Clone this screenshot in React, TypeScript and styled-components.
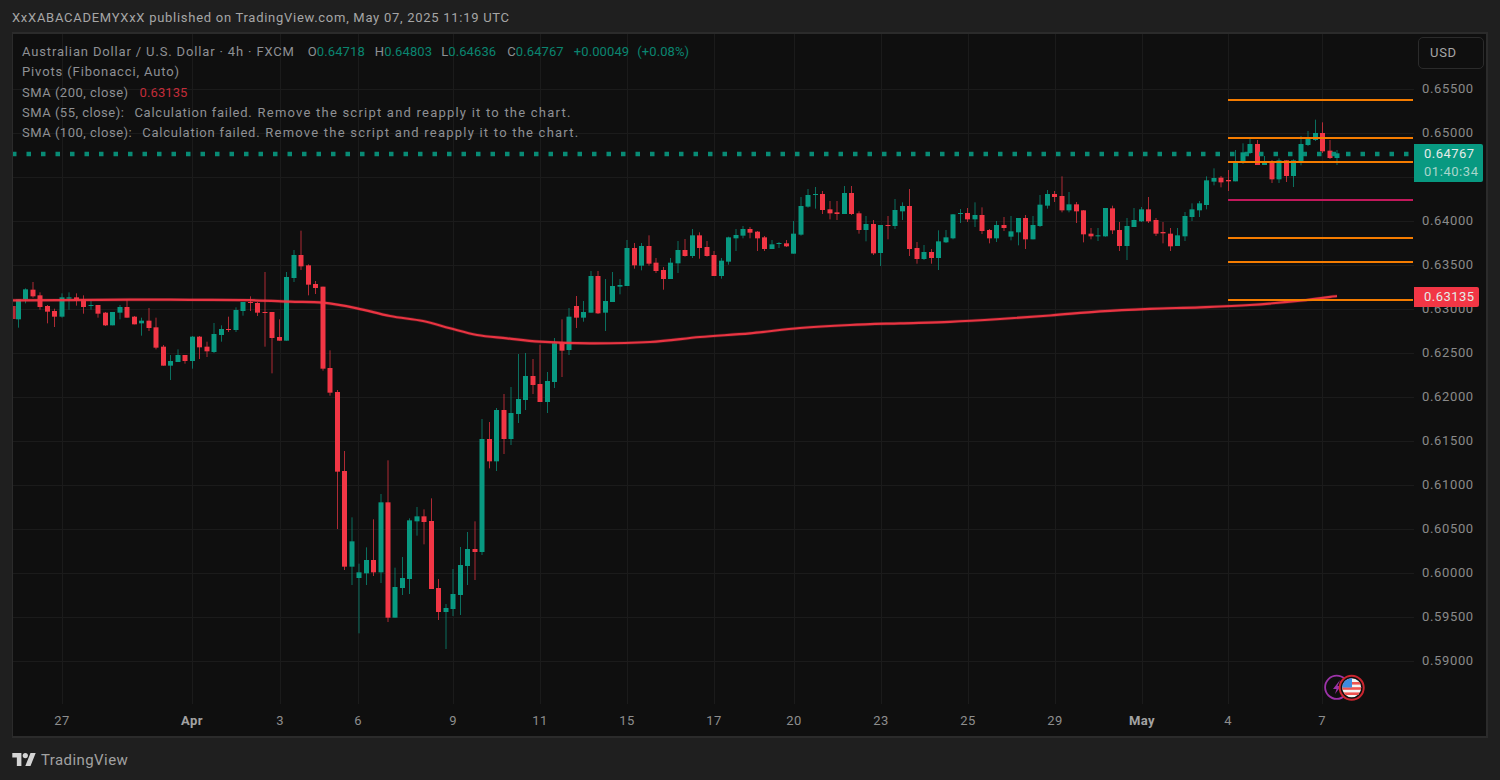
import React from "react";
import styled, { createGlobalStyle } from "styled-components";

const GlobalStyle = createGlobalStyle`
  html, body { margin: 0; padding: 0; background: #1f1f1f; }
  #root { width: 1500px; height: 780px; overflow: hidden; }
`;

const FONT = `"Roboto", "Liberation Sans", sans-serif`;
const UP = "#089981";
const DOWN = "#f23645";

const Page = styled.div`
  width: 1500px;
  height: 780px;
  display: flex;
  flex-direction: column;
  background: #1f1f1f;
  font-family: ${FONT};
`;
const Header = styled.div`
  height: 32px;
  flex: none;
  box-sizing: border-box;
  padding: 10px 0 0 12px;
  font-size: 13px;
  line-height: 16px;
  letter-spacing: 0.72px;
  color: #a6a6a6;
  white-space: nowrap;
`;
const Frame = styled.div`
  width: 1476px;
  height: 706px;
  flex: none;
  margin-left: 12px;
  box-sizing: border-box;
  border: 1px solid #2b2b2b;
  border-width: 2px 2px 2px 1px;
  background: #0f0f0f;
  display: grid;
  grid-template-columns: 1401px 72px;
  grid-template-rows: 670px 32px;
`;
const Plot = styled.div`
  position: relative;
  overflow: hidden;
  grid-column: 1;
  grid-row: 1;
`;
const PlotSvg = styled.svg`
  display: block;
  width: 1401px;
  height: 670px;
`;
const Legend = styled.div`
  position: absolute;
  left: 9px;
  top: 8px;
  font-size: 13px;
  line-height: 20.3px;
  color: #8e9094;
  white-space: nowrap;
`;
const LegendRow = styled.div`
  display: flex;
`;
const Chunk = styled.span<{ $ls: number; $gap?: number }>`
  letter-spacing: ${(p) => p.$ls}px;
  margin-left: ${(p) => p.$gap ?? 0}px;
`;
const UpValue = styled.span`
  color: #0a8570;
`;
const DownValue = styled.span`
  color: #c22c39;
  letter-spacing: 0.1px;
  margin-left: 11px;
`;
const PriceAxis = styled.div`
  position: relative;
  grid-column: 2;
  grid-row: 1 / span 2;
  box-sizing: border-box;
  padding: 3px 0 0 4px;
  display: flex;
  flex-direction: column;
  gap: 4px;
`;
const Currency = styled.div`
  box-sizing: border-box;
  flex: none;
  width: 66px;
  height: 32px;
  margin-bottom: -4px;
  border: 1px solid #2b2b2b;
  border-radius: 5px;
  padding-left: 11px;
  font-size: 13px;
  line-height: 30px;
  letter-spacing: 0.7px;
  color: #a6a6a6;
`;
const PriceTick = styled.div`
  height: 40px;
  flex: none;
  margin-left: 4px;
  font-size: 13px;
  line-height: 40px;
  letter-spacing: 0.65px;
  color: #8a8a8a;
`;
const PriceTag = styled.div<{ $top: number; $width: number; $bg: string }>`
  position: absolute;
  left: 0;
  top: ${(p) => p.$top}px;
  width: ${(p) => p.$width}px;
  box-sizing: border-box;
  padding: 1px 0 1px 10px;
  background: ${(p) => p.$bg};
  border-radius: 0 2px 2px 0;
  font-size: 13px;
  line-height: 18px;
  letter-spacing: 0.45px;
  color: #e4ece9;
`;
const Countdown = styled.div`
  color: #a9d6cc;
  letter-spacing: 0.55px;
`;
const TimeAxis = styled.div`
  grid-column: 1;
  grid-row: 2;
  display: flex;
  padding-top: 9px;
  font-size: 13px;
  line-height: 16px;
  letter-spacing: 0.4px;
  color: #8e8e8e;
  white-space: nowrap;
`;
const TimeTick = styled.div`
  flex: none;
`;
const TimeLabel = styled.span<{ $month?: boolean }>`
  display: inline-block;
  transform: translateX(-50%);
  font-weight: ${(p) => (p.$month ? 700 : 400)};
  color: ${(p) => (p.$month ? "#a3a3a3" : "#8e8e8e")};
`;
const Footer = styled.div`
  flex: 1;
  display: flex;
  align-items: center;
  gap: 5px;
  padding: 1px 0 0 12px;
`;
const Logo = styled.svg`
  width: 24px;
  height: 13px;
  display: block;
`;
const Brand = styled.span`
  font-size: 15px;
  letter-spacing: 0.42px;
  color: #a2a2a2;
`;

type Bar = [0 | 1, number, number, number, number];
const g = (a: number, b: number, c: number, d: number): Bar => [1, a, b, c, d];
const r = (a: number, b: number, c: number, d: number): Bar => [0, a, b, c, d];

const groups: { y0: number; start: number; bars: Bar[] }[] = [
  {
    y0: 220,
    start: 0,
    bars: [
      g(238, 298, 238, 323), g(208, 238, 205, 250), r(209, 229, 186, 233), r(226, 261, 217, 269),
      r(258, 275, 255, 310), r(273, 290, 266, 321), g(232, 290, 220, 293), g(232, 236, 217, 269),
      r(232, 242, 220, 257), r(238, 261, 226, 281), g(255, 257, 243, 269), r(255, 281, 255, 293),
      r(278, 316, 276, 318), g(276, 316, 276, 316), g(261, 278, 255, 298), r(261, 293, 238, 293),
      r(290, 313, 288, 313), g(302, 310, 293, 347), r(302, 324, 264, 333), r(322, 383, 293, 388),
      r(380, 437, 375, 437), g(423, 437, 405, 480), g(405, 426, 388, 426), r(405, 423, 405, 431),
      g(350, 423, 348, 446), r(350, 382, 348, 417), r(380, 394, 365, 411), g(342, 396, 309, 399),
      g(327, 345, 316, 365), r(327, 330, 290, 336), g(270, 330, 262, 336), g(246, 273, 246, 287),
      r(246, 248, 229, 273), r(249, 278, 246, 288), r(276, 278, 156, 380), r(276, 354, 276, 460),
      r(351, 362, 298, 362), g(171, 362, 156, 362), g(105, 174, 90, 186), r(105, 139, 32, 150),
      r(136, 194, 133, 226), r(192, 204, 183, 222), r(200, 446, 200, 452), r(444, 518, 391, 527),
    ],
  },
  {
    y0: 340,
    start: 44,
    bars: [
      r(156, 395, 150, 567), r(393, 680, 333, 690), g(604, 680, 532, 735), g(697, 714, 671, 880),
      g(660, 700, 622, 735), r(660, 697, 538, 708), g(487, 697, 462, 729), r(487, 833, 361, 846),
      g(741, 833, 683, 833), g(714, 744, 651, 765), g(541, 717, 535, 762), g(529, 544, 501, 587),
      r(529, 546, 508, 613), r(543, 747, 475, 747), r(744, 816, 717, 840), g(804, 816, 792, 927),
      g(762, 807, 687, 828), g(675, 765, 621, 825), g(627, 678, 576, 735), r(627, 636, 544, 720),
      g(297, 636, 237, 645), r(297, 364, 246, 385), g(210, 364, 204, 393), r(210, 297, 162, 342),
      g(219, 297, 141, 315), g(177, 222, 42, 249), g(108, 180, 39, 210), r(108, 135, 57, 162),
      r(132, 186, 14, 186), g(123, 186, 96, 219), g(10, 126, -6, 144),
    ],
  },
  {
    y0: 170,
    start: 75,
    bars: [
      r(516, 542, 448, 621), g(440, 540, 414, 555), r(408, 443, 378, 474), g(426, 443, 393, 455),
      g(318, 428, 303, 428), r(318, 430, 303, 432), g(393, 428, 327, 483), g(348, 396, 306, 396),
      g(345, 350, 327, 373), g(234, 348, 210, 348), r(234, 286, 219, 296), g(228, 287, 219, 301),
      r(228, 281, 196, 287), r(278, 303, 264, 309), r(300, 327, 291, 359), g(278, 327, 264, 327),
      g(240, 280, 213, 309), r(240, 258, 207, 260), g(196, 258, 177, 264), r(196, 234, 187, 266),
      r(231, 258, 213, 260), r(255, 318, 243, 318), g(272, 318, 264, 326), g(202, 275, 200, 284),
      g(195, 205, 177, 243), g(177, 197, 168, 205), r(177, 188, 171, 205), r(185, 205, 183, 243),
      r(202, 237, 198, 243), g(223, 237, 210, 237), g(219, 221, 216, 234), r(220, 229, 210, 231),
      g(191, 251, 153, 251), g(108, 194, 81, 197), g(75, 110, 57, 113), g(72, 75, 51, 116),
      r(72, 120, 63, 132), r(118, 130, 93, 148), r(127, 132, 93, 150), g(69, 132, 48, 132),
      r(69, 132, 48, 135), r(130, 180, 124, 191), g(162, 180, 138, 214), r(162, 250, 150, 255),
      g(165, 249, 165, 288), r(165, 168, 138, 208), g(120, 168, 87, 177),
      g(108, 124, 97, 150), r(108, 237, 57, 258), r(234, 267, 216, 281), g(246, 267, 225, 270),
      r(246, 264, 237, 281), g(214, 264, 181, 300), g(202, 217, 180, 219), g(133, 205, 132, 208),
      g(129, 132, 117, 159), r(129, 148, 114, 156), g(135, 148, 97, 171), r(135, 183, 112, 192),
      r(180, 205, 177, 220), g(165, 205, 153, 216), r(165, 174, 141, 183), g(184, 200, 138, 211),
      g(144, 187, 144, 226), r(144, 208, 135, 237), g(165, 208, 138, 208), g(104, 168, 75, 171),
      g(72, 107, 60, 116), r(72, 81, 63, 96), r(78, 121, 19, 127), g(103, 121, 66, 127),
      r(103, 124, 96, 159), r(121, 193, 120, 217), r(191, 199, 174, 208), g(196, 199, 174, 213),
      g(114, 199, 114, 200), r(115, 181, 107, 192), r(180, 228, 156, 243), g(168, 228, 144, 270),
      g(150, 171, 114, 171), g(118, 154, 111, 156), r(118, 154, 81, 159), r(150, 191, 144, 198),
      r(186, 190, 156, 220), r(191, 229, 174, 243), g(196, 228, 174, 228), g(138, 199, 126, 213),
      g(118, 141, 100, 153), g(100, 121, 93, 141), g(31, 105, 19, 118), g(24, 35, -5, 46),
    ],
  },
  {
    y0: 30,
    start: 166,
    bars: [
      r(443, 457, 438, 472), r(450, 454, 420, 483), g(395, 454, 360, 454), g(367, 396, 340, 402),
      g(342, 369, 323, 372), r(342, 405, 330, 405), g(393, 405, 378, 405), r(393, 448, 390, 459),
      g(391, 448, 385, 459), r(391, 438, 391, 456), g(391, 438, 388, 471), g(342, 396, 318, 406),
      g(324, 345, 303, 348), g(309, 330, 269, 333), r(309, 364, 277, 369), r(362, 384, 330, 387),
      g(370, 384, 360, 405),
    ],
  },
];

const X0 = 18.5;
const DX = 7.245;

const candles = groups.flatMap((group) =>
  group.bars.map(([up, a, b, c, d], n) => {
    const i = group.start + n;
    const y = (z: number) => group.y0 + z / 3;
    return { i, up, x: Math.round((X0 + i * DX) * 2) / 2, top: y(a), bot: y(b), hi: y(c), lo: y(d) };
  })
);

const sma: [number, number][] = [
  [13, 300.4], [60, 300.2], [130, 299.6], [190, 299.8], [250, 300.2], [290, 301.6], [323, 302.7], [357, 308.3],
  [390, 316], [423, 321], [450, 328.3], [477, 335], [507, 338.3], [540, 341.7], [590, 343.3], [650, 342],
  [700, 337], [750, 333.3], [800, 328], [850, 325], [900, 323.3], [950, 321.8], [1000, 319], [1050, 315.5],
  [1100, 311.3], [1150, 308.8], [1200, 307.3], [1250, 305], [1300, 300.7], [1337, 296],
];

function smoothPath(pts: [number, number][]) {
  let d = `M${pts[0][0]} ${pts[0][1]}`;
  for (let i = 0; i < pts.length - 1; i++) {
    const p0 = pts[Math.max(i - 1, 0)];
    const p1 = pts[i];
    const p2 = pts[i + 1];
    const p3 = pts[Math.min(i + 2, pts.length - 1)];
    const c1x = p1[0] + (p2[0] - p0[0]) / 6;
    const c1y = p1[1] + (p2[1] - p0[1]) / 6;
    const c2x = p2[0] - (p3[0] - p1[0]) / 6;
    const c2y = p2[1] - (p3[1] - p1[1]) / 6;
    d += `C${c1x} ${c1y} ${c2x} ${c2y} ${p2[0]} ${p2[1]}`;
  }
  return d;
}

const H_GRID = [89, 133, 177, 221, 265, 309, 353, 397, 441, 485, 529, 573, 617, 661];
const V_GRID = [62, 192, 280, 358, 453, 540, 627, 714, 794, 881, 968, 1055, 1142, 1228, 1322];
const PRICES = [
  "0.65500", "0.65000", "0.64500", "0.64000", "0.63500", "0.63000", "0.62500",
  "0.62000", "0.61500", "0.61000", "0.60500", "0.60000", "0.59500", "0.59000",
];
const ORANGE = [100, 138, 162, 238, 262, 300];

const TICKS: { x: number; label: string; month?: boolean }[] = [
  { x: 62, label: "27" }, { x: 192, label: "Apr", month: true }, { x: 280, label: "3" },
  { x: 358, label: "6" }, { x: 453, label: "9" }, { x: 540, label: "11" }, { x: 627, label: "15" },
  { x: 714, label: "17" }, { x: 794, label: "20" }, { x: 881, label: "23" }, { x: 968, label: "25" },
  { x: 1055, label: "29" }, { x: 1142, label: "May", month: true }, { x: 1228, label: "4" }, { x: 1322, label: "7" },
];

function Chart() {
  const line = smoothPath(sma);
  return (
    <PlotSvg viewBox="13 34 1401 670">
      <defs>
        <clipPath id="flag">
          <circle cx={1351.7} cy={687.7} r={9.5} />
        </clipPath>
      </defs>
      {H_GRID.map((y) => (
        <line key={y} x1={13} x2={1414} y1={y + 0.5} y2={y + 0.5} stroke="#1b1b1b" />
      ))}
      {V_GRID.map((x) => (
        <line key={x} x1={x + 0.5} x2={x + 0.5} y1={34} y2={704} stroke="#1b1b1b" />
      ))}
      <rect x={10.6} y={306} width={5} height={13} fill={DOWN} opacity={0.75} />
      {candles.map((c) => (
        <g key={c.i} fill={c.up ? UP : DOWN}>
          <rect x={c.x - 0.5} y={c.hi} width={1} height={c.lo - c.hi} opacity={0.7} />
          <rect x={c.x - 2.5} y={c.top} width={5} height={Math.max(c.bot - c.top, 1)} />
        </g>
      ))}
      <path d={line} fill="none" stroke={DOWN} strokeOpacity={0.22} strokeWidth={3.6} />
      <path d={line} fill="none" stroke={DOWN} strokeOpacity={0.95} strokeWidth={2.2} />
      {ORANGE.map((y) => (
        <line key={y} x1={1228} x2={1413} y1={y} y2={y} stroke="#f57c00" strokeWidth={2} />
      ))}
      <line x1={1228} x2={1413} y1={200} y2={200} stroke="#c2185b" strokeWidth={2} />
      <line x1={12} x2={1413} y1={154} y2={154} stroke={UP} strokeWidth={4.5} strokeOpacity={0.9} strokeDasharray="4.5 10" />
      <circle cx={1336.7} cy={687.3} r={11.6} fill="#0f0f0f" stroke="#9c33a8" strokeWidth={1.8} />
      <path d="M1340 680l-7 9h3.5l-1.5 5 6-8h-3.5z" fill="#9c33a8" />
      <circle cx={1351.7} cy={687.7} r={12} fill="#0f0f0f" stroke="#c9252f" strokeWidth={2} />
      <g clipPath="url(#flag)">
        <rect x={1341} y={677} width={22} height={22} fill="#f4f4f4" />
        <rect x={1341} y={682} width={22} height={2.6} fill="#ef5350" />
        <rect x={1341} y={687.2} width={22} height={2.6} fill="#ef5350" />
        <rect x={1341} y={692.4} width={22} height={2.6} fill="#ef5350" />
        <rect x={1341} y={677} width={11} height={10.5} fill="#3d8be0" />
      </g>
    </PlotSvg>
  );
}

export default function App() {
  return (
    <Page>
      <GlobalStyle />
      <Header>XxXABACADEMYXxX published on TradingView.com, May 07, 2025 11:19 UTC</Header>
      <Frame>
        <Plot>
          <Chart />
          <Legend>
            <LegendRow>
              <Chunk $ls={0.85}>Australian Dollar / U.S. Dollar · 4h · FXCM</Chunk>
              <Chunk $ls={0.1} $gap={13}>O<UpValue>0.64718</UpValue></Chunk>
              <Chunk $ls={0.1} $gap={10}>H<UpValue>0.64803</UpValue></Chunk>
              <Chunk $ls={0.1} $gap={9}>L<UpValue>0.64636</UpValue></Chunk>
              <Chunk $ls={0.1} $gap={11}>C<UpValue>0.64767</UpValue></Chunk>
              <Chunk $ls={0.1} $gap={10}><UpValue>+0.00049</UpValue></Chunk>
              <Chunk $ls={0.1} $gap={8}><UpValue>(+0.08%)</UpValue></Chunk>
            </LegendRow>
            <LegendRow>
              <Chunk $ls={0.87}>Pivots (Fibonacci, Auto)</Chunk>
            </LegendRow>
            <LegendRow>
              <Chunk $ls={0.5}>SMA (200, close)</Chunk>
              <DownValue>0.63135</DownValue>
            </LegendRow>
            <LegendRow>
              <Chunk $ls={0.5}>SMA (55, close):</Chunk>
              <Chunk $ls={0.76} $gap={10}>Calculation failed.</Chunk>
              <Chunk $ls={1.22} $gap={5}>Remove the script and reapply it to the chart.</Chunk>
            </LegendRow>
            <LegendRow>
              <Chunk $ls={0.5}>SMA (100, close):</Chunk>
              <Chunk $ls={0.76} $gap={10}>Calculation failed.</Chunk>
              <Chunk $ls={1.22} $gap={5}>Remove the script and reapply it to the chart.</Chunk>
            </LegendRow>
          </Legend>
        </Plot>
        <PriceAxis>
          <Currency>USD</Currency>
          {PRICES.map((p) => (
            <PriceTick key={p}>{p}</PriceTick>
          ))}
          <PriceTag $top={110} $width={69} $bg={UP}>
            0.64767
            <Countdown>01:40:34</Countdown>
          </PriceTag>
          <PriceTag $top={253} $width={65} $bg={DOWN}>0.63135</PriceTag>
        </PriceAxis>
        <TimeAxis>
          <TimeTick style={{ width: TICKS[0].x - 13 }} />
          {TICKS.map((t, i) => (
            <TimeTick key={t.x} style={{ width: i + 1 < TICKS.length ? TICKS[i + 1].x - t.x : 0 }}>
              <TimeLabel $month={t.month}>{t.label}</TimeLabel>
            </TimeTick>
          ))}
        </TimeAxis>
      </Frame>
      <Footer>
        <Logo viewBox="0 0 36 20">
          <path d="M14 20H7V7H0V0h14v20zM28 20h-8L28 0h8l-8 20z" fill="#d4d4d4" />
          <circle cx={20} cy={4} r={4} fill="#d4d4d4" />
        </Logo>
        <Brand>TradingView</Brand>
      </Footer>
    </Page>
  );
}
